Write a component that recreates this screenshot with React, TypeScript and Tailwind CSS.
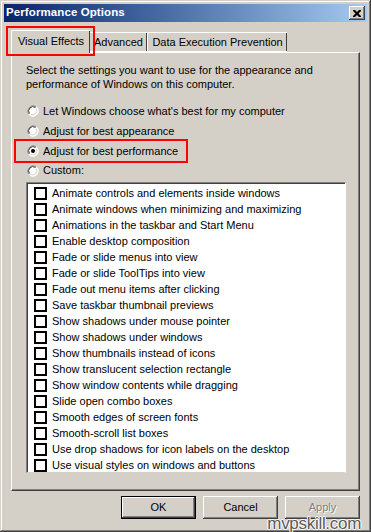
import React from "react";

const items = [
  "Animate controls and elements inside windows",
  "Animate windows when minimizing and maximizing",
  "Animations in the taskbar and Start Menu",
  "Enable desktop composition",
  "Fade or slide menus into view",
  "Fade or slide ToolTips into view",
  "Fade out menu items after clicking",
  "Save taskbar thumbnail previews",
  "Show shadows under mouse pointer",
  "Show shadows under windows",
  "Show thumbnails instead of icons",
  "Show translucent selection rectangle",
  "Show window contents while dragging",
  "Slide open combo boxes",
  "Smooth edges of screen fonts",
  "Smooth-scroll list boxes",
  "Use drop shadows for icon labels on the desktop",
  "Use visual styles on windows and buttons",
];

function Radio({ checked }: { checked?: boolean }) {
  return (
    <svg width="12" height="12" viewBox="0 0 12 12" className="shrink-0">
      <circle cx="6" cy="6" r="5.5" fill="#ffffff" />
      <path d="M1.5 9 A5.5 5.5 0 0 1 9 1.5" stroke="#808080" strokeWidth="1" fill="none" />
      <path d="M2.5 8.5 A4.3 4.3 0 0 1 8.5 2.5" stroke="#404040" strokeWidth="1" fill="none" />
      <path d="M10.5 3 A5.5 5.5 0 0 1 3 10.5" stroke="#ffffff" strokeWidth="1" fill="none" />
      <path d="M9.5 3.8 A4.3 4.3 0 0 1 3.8 9.5" stroke="#d4d0c8" strokeWidth="1" fill="none" />
      {checked && <circle cx="6" cy="6" r="2" fill="#000" />}
    </svg>
  );
}

const raised =
  "shadow-[inset_-1px_-1px_#404040,inset_1px_1px_#ffffff,inset_-2px_-2px_#808080,inset_2px_2px_#d4d0c8]";

export default function App() {
  return (
    <div
      className="relative w-[371px] h-[532px] bg-[#d4d0c8] text-[11px] text-black shadow-[inset_-1px_-1px_#404040,inset_1px_1px_#d4d0c8,inset_-2px_-2px_#808080,inset_2px_2px_#ffffff] overflow-hidden"
      style={{ fontFamily: "Tahoma, 'Liberation Sans', Arial, sans-serif" }}
    >
      {/* title bar */}
      <div className="mx-[4px] pt-[4px]">
        <div className="h-[18px] bg-gradient-to-r from-[#0a246a] to-[#a6caf0] flex items-center justify-between pl-[2px] pr-[2px]">
          <span className="text-white font-bold text-[11.5px] tracking-[0.1px]">Performance Options</span>
          <div className={`w-[16px] h-[14px] bg-[#d4d0c8] ${raised} flex items-center justify-center`}>
            <svg width="8" height="7" viewBox="0 0 8 7">
              <path d="M0 0h2l2 2 2-2h2v1L5.5 3.5 8 6v1H6L4 5 2 7H0V6l2.5-2.5L0 1z" fill="#000" />
            </svg>
          </div>
        </div>
      </div>

      {/* tabs */}
      <div className="px-[11px] mt-[8px]">
        <div className="flex items-end h-[23px] relative z-10">
          <div className="w-[79px] h-[23px] bg-[#d4d0c8] border-l border-t border-white rounded-tl-[2px] shadow-[inset_-1px_0_#404040] flex items-center justify-center pb-[1px]">
            Visual Effects
          </div>
          <div className="w-[57px] h-[20px] bg-[#d4d0c8] border-t border-white shadow-[inset_-1px_0_#404040] flex items-center justify-center mb-[1px] border-b border-b-white">
            Advanced
          </div>
          <div className="w-[140px] h-[20px] bg-[#d4d0c8] border-l border-t border-white rounded-tl-[2px] shadow-[inset_-1px_0_#404040] flex items-center justify-center mb-[1px] border-b border-b-white">
            Data Execution Prevention
          </div>
        </div>

        {/* panel */}
        <div className="h-[439px] w-[349px] -mt-[1px] border-l border-t border-white shadow-[inset_-1px_-1px_#808080] border-r border-b border-r-[#404040] border-b-[#404040] px-[14px] pt-[10px]">
          <p className="leading-[14px]">
            Select the settings you want to use for the appearance and
            <br />
            performance of Windows on this computer.
          </p>
          <div className="mt-[10px] flex flex-col">
            <div className="flex items-center gap-[4px] h-[20px] pl-[1px]">
              <Radio />
              <span>Let Windows choose what's best for my computer</span>
            </div>
            <div className="flex items-center gap-[4px] h-[20px] pl-[1px]">
              <Radio />
              <span>Adjust for best appearance</span>
            </div>
            <div className="flex items-center gap-[4px] h-[20px] pl-[1px]">
              <Radio checked />
              <span>Adjust for best performance</span>
            </div>
            <div className="flex items-center gap-[4px] h-[19px] pl-[1px]">
              <Radio />
              <span>Custom:</span>
            </div>
          </div>

          {/* list */}
          <div className="mt-[2px] w-[320px] h-[291px] bg-white border-l border-t border-[#808080] border-r border-b border-r-white border-b-[#d4d0c8] shadow-[inset_1px_1px_#404040] pt-[2px] pl-[7px]">
            {items.map((t) => (
              <div key={t} className="flex items-center h-[16px] gap-[5px]">
                <div className="w-[13px] h-[13px] border-2 border-black bg-white shrink-0" />
                <span className="whitespace-nowrap">{t}</span>
              </div>
            ))}
          </div>
        </div>

        {/* buttons */}
        <div className="flex justify-end gap-[7px] mt-[5px]">
          <div className="w-[75px] h-[23px] border border-black flex items-center justify-center bg-[#d4d0c8] shadow-[inset_-1px_-1px_#404040,inset_1px_1px_#ffffff,inset_-2px_-2px_#808080]">
            OK
          </div>
          <div className={`w-[75px] h-[23px] flex items-center justify-center bg-[#d4d0c8] ${raised}`}>
            Cancel
          </div>
          <div className={`w-[75px] h-[23px] flex items-center justify-center bg-[#d4d0c8] ${raised} text-[#808080] [text-shadow:1px_1px_#ffffff]`}>
            Apply
          </div>
        </div>
      </div>

      {/* red highlight boxes */}
      <div className="absolute left-[6px] top-[26px] w-[89px] h-[30px] border-2 border-[#ff0000] z-20" />
      <div className="absolute left-[14px] top-[139px] w-[174px] h-[24px] border-2 border-[#ff0000] z-20" />

      {/* watermark */}
      <div
        className="absolute right-[10px] bottom-[-2px] text-[17px] leading-[20px] text-[#5a5a5a] tracking-[-0.3px] z-30 [text-shadow:1px_0_#ffffff,-1px_0_#ffffff,0_1px_#ffffff,0_-1px_#ffffff]"
        style={{ fontFamily: "'Liberation Sans', Arial, sans-serif" }}
      >
        mvpskill.com
      </div>
    </div>
  );
}
